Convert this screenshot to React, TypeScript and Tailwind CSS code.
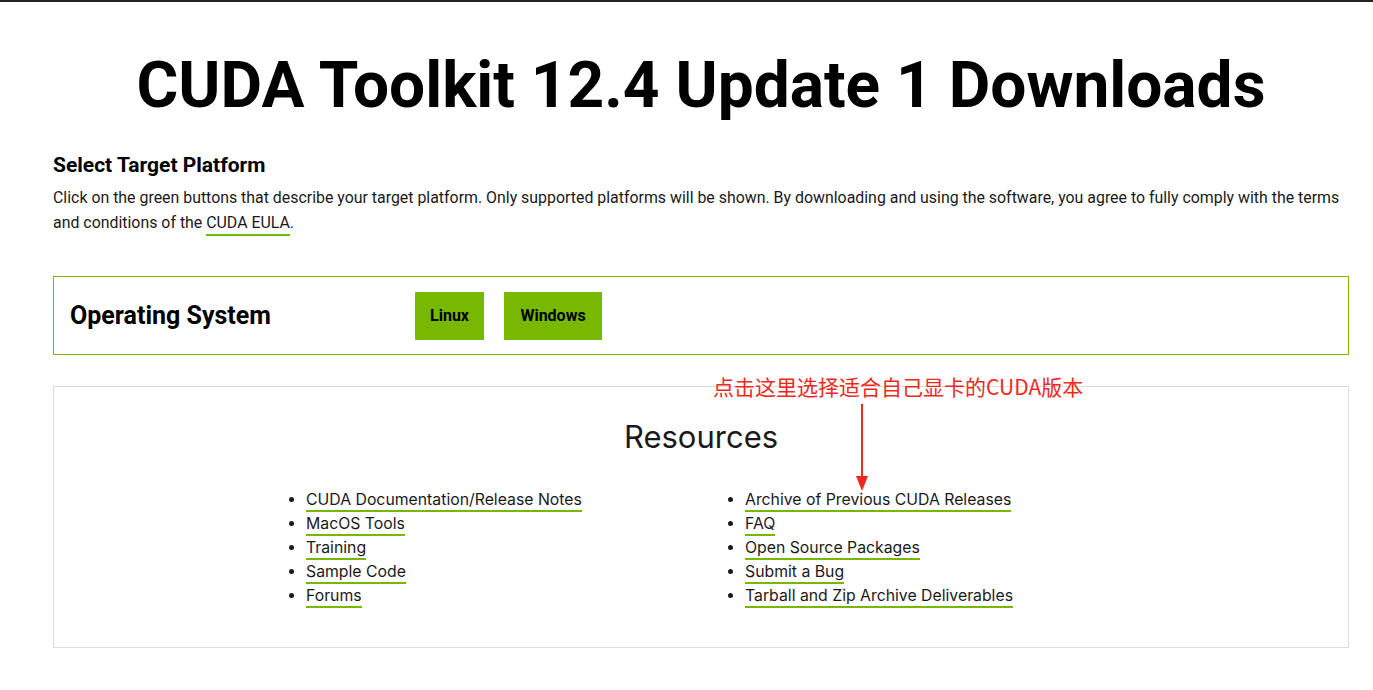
const leftLinks = [
  "CUDA Documentation/Release Notes",
  "MacOS Tools",
  "Training",
  "Sample Code",
  "Forums",
];

const rightLinks = [
  "Archive of Previous CUDA Releases",
  "FAQ",
  "Open Source Packages",
  "Submit a Bug",
  "Tarball and Zip Archive Deliverables",
];

const LinkList = ({ items }: { items: string[] }) => (
  <ul className="list-disc pl-[16px] text-[15.8px] leading-[24px] text-[#1a1a1a] marker:text-[#1a1a1a]">
    {items.map((item) => (
      <li key={item}>
        <a href="#" className="border-b-2 border-[#76b900] pb-[1px]">
          {item}
        </a>
      </li>
    ))}
  </ul>
);

export default function App() {
  return (
    <div className="min-h-screen bg-white font-['Roboto',sans-serif] text-black">
      <div className="h-[2px] bg-[#222]" />
      <div className="pl-[53px] pr-[24px]">
        <h1 className="pt-[44px] text-center text-[64px] font-bold leading-[80px]">
          CUDA Toolkit 12.4 Update 1 Downloads
        </h1>

        <h2 className="mt-[26px] text-[21px] font-bold leading-[26px]">Select Target Platform</h2>
        <p className="mt-[7px] text-[15.9px] leading-[25px] text-[#1a1a1a]">
          Click on the green buttons that describe your target platform. Only supported platforms will be shown. By
          downloading and using the software, you agree to fully comply with the terms and conditions of the{" "}
          <a href="#" className="border-b-2 border-[#76b900] pb-[2px]">
            CUDA EULA
          </a>
          .
        </p>

        <div className="mt-[41px] flex h-[79px] items-center border border-[#76b900] pl-[16px]">
          <div className="w-[345px] text-[25px] font-bold">Operating System</div>
          <div className="flex gap-[20px]">
            <button className="h-[48px] w-[69px] bg-[#76b900] text-[16px] font-bold">Linux</button>
            <button className="h-[48px] w-[98px] bg-[#76b900] text-[16px] font-bold">Windows</button>
          </div>
        </div>

        <div className="relative mt-[31px] h-[262px] border border-[#dddddd] font-['Inter',sans-serif]">
          <h3 className="pt-[30px] text-center text-[31px] leading-[40px] text-[#1a1a1a]">Resources</h3>
          <div className="mt-[31px] grid grid-cols-[439px_1fr] pl-[236px]">
            <LinkList items={leftLinks} />
            <LinkList items={rightLinks} />
          </div>

          {/* annotation */}
          <span className="absolute left-[659px] top-[-15px] font-['Noto_Sans_CJK_SC',sans-serif] text-[21px] leading-[28px] text-[#ee2a1e]">
            点击这里选择适合自己显卡的CUDA版本
          </span>
          <svg className="absolute left-[800px] top-[17px]" width="16" height="88" viewBox="0 0 16 88">
            <line x1="8" y1="0" x2="8" y2="74" stroke="#ee2a1e" strokeWidth="2" />
            <polygon points="2,72 14,72 8,87" fill="#ee2a1e" />
          </svg>
        </div>
      </div>
    </div>
  );
}
